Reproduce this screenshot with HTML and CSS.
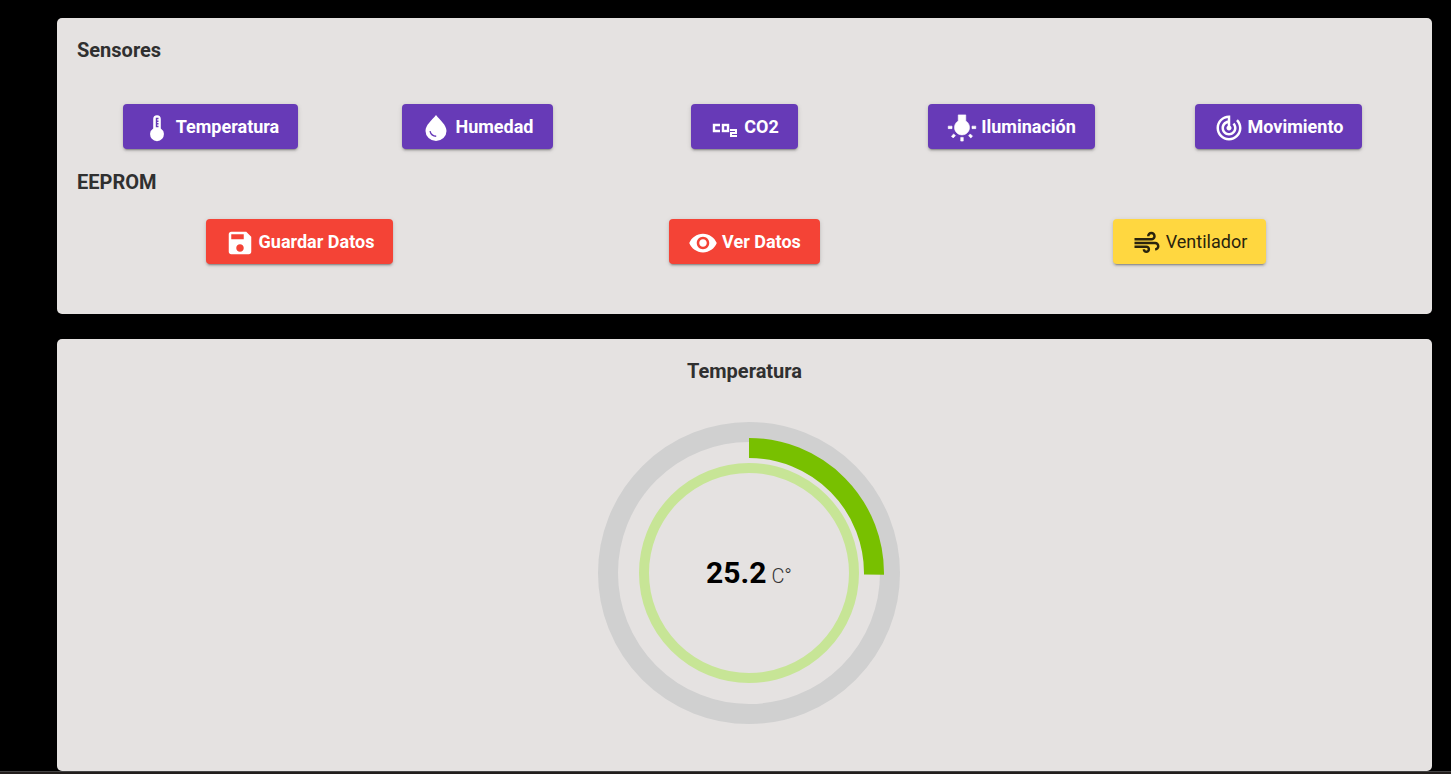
FILE: index.html
```html
<!DOCTYPE html>
<html lang="es">
<head>
<meta charset="utf-8">
<meta name="viewport" content="width=device-width, initial-scale=1">
<title>Sensores</title>
<link rel="stylesheet" href="styles.css">
</head>
<body>
<main class="page">
  <section class="card controls">
    <h2 class="title title-sensors">Sensores</h2>
    <div class="row">
      <div class="cell"><button type="button" class="btn primary">
        <svg class="icon" viewBox="0 0 30 30" aria-hidden="true"><path d="M11.200 6a3.800 3.800 0 0 1 7.600 0V15.500a6.900 6.900 0 1 1-7.600 0z"/><path class="mark" d="M16.500 5.500h-2v8h2M14.500 8.200h2M14.500 10.800h2"/></svg>
        <span>Temperatura</span></button></div>
      <div class="cell"><button type="button" class="btn primary">
        <svg class="icon" viewBox="0 0 30 30" aria-hidden="true"><path d="M15 2C11 7 4.500 12 4.500 18a10.500 10 0 0 0 21 0C25.500 12 19 7 15 2z"/><path class="mark" d="M9 18.200c.8 3.200 3 5 6.200 5"/></svg>
        <span>Humedad</span></button></div>
      <div class="cell"><button type="button" class="btn primary">
        <svg class="icon" viewBox="0 0 30 30" aria-hidden="true"><g class="lines"><polyline points="10,12 4,12 4,18 10,18"/><rect x="13" y="12" width="5" height="6"/><polyline points="20,17 26,17 26,20 21,20 21,23 27,23"/></g></svg>
        <span>CO2</span></button></div>
      <div class="cell"><button type="button" class="btn primary">
        <svg class="icon" viewBox="0 0 24 24" aria-hidden="true"><path class="bold" d="M3.550 18.540l1.410 1.410 1.800-1.790-1.410-1.410-1.800 1.790zM11 22.450h2V19.500h-2v2.950zM4 10.500H1v2h3v-2zm11-4.190V1.500H9v4.810C7.210 7.350 6 9.280 6 11.500c0 3.310 2.690 6 6 6s6-2.690 6-6c0-2.220-1.210-4.150-3-5.190zm5 4.190v2h3v-2h-3zm-2.760 7.660l1.790 1.800 1.410-1.410-1.800-1.790-1.400 1.400z"/></svg>
        <span>Iluminación</span></button></div>
      <div class="cell"><button type="button" class="btn primary">
        <svg class="icon" viewBox="0 0 24 24" aria-hidden="true"><path d="M19.070 4.930l-1.410 1.410C19.100 7.790 20 9.790 20 12c0 4.420-3.580 8-8 8s-8-3.580-8-8c0-4.080 3.050-7.440 7-7.930v2.020C8.160 6.570 6 9.030 6 12c0 3.310 2.690 6 6 6s6-2.690 6-6c0-1.660-.67-3.160-1.760-4.240l-1.410 1.410C15.550 9.900 16 10.900 16 12c0 2.210-1.790 4-4 4s-4-1.790-4-4c0-1.860 1.280-3.410 3-3.860v2.140c-.6.35-1 .98-1 1.720 0 1.100.9 2 2 2s2-.9 2-2c0-.74-.4-1.380-1-1.720V2h-1C6.480 2 2 6.480 2 12s4.480 10 10 10 10-4.480 10-10c0-2.760-1.120-5.260-2.930-7.070z"/></svg>
        <span>Movimiento</span></button></div>
    </div>
    <h2 class="title title-eeprom">EEPROM</h2>
    <div class="row">
      <div class="cell"><button type="button" class="btn warn">
        <svg class="icon" viewBox="0 0 24 24" aria-hidden="true"><path d="M17 3H5c-1.110 0-2 .9-2 2v14c0 1.100.89 2 2 2h14c1.100 0 2-.9 2-2V7l-4-4zm-5 16c-1.660 0-3-1.340-3-3s1.340-3 3-3 3 1.340 3 3-1.340 3-3 3zm3-10H5V5h10v4z"/></svg>
        <span>Guardar Datos</span></button></div>
      <div class="cell"><button type="button" class="btn warn">
        <svg class="icon" viewBox="0 0 24 24" aria-hidden="true"><path d="M12 4.500C7 4.500 2.730 7.610 1 12c1.730 4.390 6 7.500 11 7.500s9.270-3.110 11-7.500c-1.730-4.390-6-7.500-11-7.500zM12 17c-2.760 0-5-2.240-5-5s2.240-5 5-5 5 2.240 5 5-2.240 5-5 5zm0-8c-1.660 0-3 1.340-3 3s1.340 3 3 3 3-1.340 3-3-1.340-3-3-3z"/></svg>
        <span>Ver Datos</span></button></div>
      <div class="cell"><button type="button" class="btn accent">
        <svg class="icon" viewBox="0 0 24 24" aria-hidden="true"><path d="M14.500 17c0 1.650-1.350 3-3 3s-3-1.350-3-3h2c0 .55.45 1 1 1s1-.45 1-1-.45-1-1-1H2v-2h9.500c1.650 0 3 1.350 3 3zM19 6.500C19 4.570 17.430 3 15.500 3S12 4.570 12 6.500h2c0-.83.67-1.500 1.500-1.500s1.500.67 1.500 1.500S16.330 8 15.500 8H2v2h13.500c1.930 0 3.500-1.570 3.500-3.500zm-.5 4.500H2v2h16.500c.83 0 1.500.67 1.500 1.500s-.67 1.500-1.500 1.500v2c1.930 0 3.500-1.570 3.500-3.500S20.430 11 18.500 11z"/></svg>
        <span>Ventilador</span></button></div>
    </div>
  </section>

  <section class="card reading">
    <h2 class="title title-reading">Temperatura</h2>
    <div class="gauge">
      <svg class="dial" viewBox="0 0 302 302" aria-hidden="true">
        <circle class="track" cx="151" cy="151" r="141"/>
        <circle class="inner" cx="151" cy="151" r="105"/>
        <path class="value-arc" d="M151 26A125 125 0 0 1 275.990 152.570"/>
      </svg>
      <p class="value"><strong class="number">25.2</strong> <span class="unit">C°</span></p>
    </div>
  </section>
</main>
<footer class="edge"></footer>
</body>
</html>
```

FILE: styles.css
```css
* {
  box-sizing: border-box;
}

body {
  margin: 0;
  background: #000;
  font-family: Roboto, "Liberation Sans", sans-serif;
}

.page {
  display: flex;
  flex-direction: column;
  gap: 25px;
  padding: 18px 19px 0 57px;
}

.card {
  padding: 20px;
  border-radius: 5px;
  background: #e5e2e1;
}

.controls {
  padding-bottom: 50px;
}

.reading {
  padding-bottom: 47px;
}

.title {
  margin: 0;
  color: #303030;
  font-size: 20px;
  font-weight: 700;
  line-height: 24px;
}

.title-sensors {
  margin-bottom: 42px;
}

.title-eeprom {
  margin: 21px 0 25px;
}

.title-reading {
  margin-bottom: 39px;
  text-align: center;
}

.row {
  display: flex;
}

.cell {
  display: flex;
  flex: 1;
  justify-content: center;
}

.btn {
  display: flex;
  align-items: center;
  gap: 4px;
  height: 45px;
  padding: 0 19px;
  border: 0;
  border-radius: 4px;
  box-shadow: 0 3px 1px -2px rgba(0, 0, 0, 0.2), 0 2px 2px rgba(0, 0, 0, 0.14), 0 1px 5px rgba(0, 0, 0, 0.12);
  font-family: inherit;
  font-size: 18px;
  font-weight: 700;
  white-space: nowrap;
  cursor: pointer;
}

.primary {
  background: #673ab7;
  color: #fff;
}

.warn {
  background: #f44336;
  color: #fff;
}

.accent {
  background: #ffd740;
  color: #29230d;
  font-weight: 400;
}

.icon {
  width: 30px;
  height: 30px;
  margin-top: 3px;
  fill: currentColor;
}

.mark {
  fill: none;
  stroke: #673ab7;
  stroke-width: 1.4;
}

.bold {
  stroke: currentColor;
  stroke-width: 0.5;
}

.lines {
  fill: none;
  stroke: currentColor;
  stroke-width: 2.4;
}

.lines polyline:last-child {
  stroke-width: 2;
}

.gauge {
  display: grid;
  place-items: center;
  padding-left: 9px;
}

.dial,
.value {
  grid-area: 1 / 1;
}

.dial {
  width: 302px;
  height: 302px;
  fill: none;
}

.track {
  stroke: #d0d0d0;
  stroke-width: 20;
}

.inner {
  stroke: #c7e596;
  stroke-width: 10;
}

.value-arc {
  stroke: #78c000;
  stroke-width: 20;
}

.value {
  margin: 0;
  padding-top: 2px;
  color: #333;
  font-size: 20px;
  line-height: 36px;
}

.number {
  color: #000;
  font-size: 30px;
}

.unit {
  font-weight: 300;
}

.edge {
  height: 3px;
  border-top: 1px solid #444;
  background: #221e1c;
}
```
